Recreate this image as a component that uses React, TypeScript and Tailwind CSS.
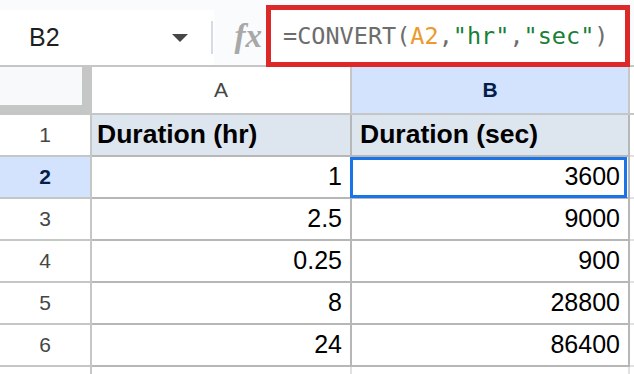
import React from 'react';

const rows = [
  { n: '1', a: 'Duration (hr)', b: 'Duration (sec)', head: true },
  { n: '2', a: '1', b: '3600', sel: true },
  { n: '3', a: '2.5', b: '9000' },
  { n: '4', a: '0.25', b: '900' },
  { n: '5', a: '8', b: '28800' },
  { n: '6', a: '24', b: '86400' },
];

const App: React.FC = () => {
  return (
    <div className="relative w-[634px] h-[374px] overflow-hidden bg-white font-['Liberation_Sans',Arial,sans-serif] text-black">
      {/* name box + formula bar */}
      <div className="flex h-[67px] pt-[10px] bg-[#f9fbfd] border-b-2 border-[#c4c7c5]">
        <div className="flex items-center w-[214px] h-[55px] bg-white">
          <span className="w-[172px] pl-[29px] text-[25px] text-[#1f1f1f]">B2</span>
          <svg width="16" height="8" viewBox="0 0 16 8" className="mt-[1px]">
            <polygon points="0,0 16,0 8,8" fill="#444746" />
          </svg>
          <div className="ml-auto mr-[1px] w-[2px] h-[33px] bg-[#d3dce6]" />
        </div>
        <div className="flex items-center justify-end w-[52px] h-[55px] pr-[4px]">
          <span className="font-['Liberation_Serif',serif] italic font-bold text-[33px] text-[#a8a8a8] leading-none mb-[2px]">
            fx
          </span>
        </div>
      </div>

      {/* formula, outlined in red */}
      <div className="absolute left-[266px] top-[5px] w-[364px] h-[62px] border-[5px] border-[#dc2828] bg-white flex items-center pl-[12px] pt-[2px]">
        <span className="font-['DejaVu_Sans_Mono',monospace] text-[23.5px] text-[#6d6d6d] whitespace-pre">
          =CONVERT(<span className="text-[#ec9a2e]">A2</span>,<span className="text-[#188038]">"hr"</span>,<span className="text-[#188038]">"sec"</span>)
        </span>
      </div>

      {/* column headers */}
      <div className="flex h-[48px]">
        <div className="w-[92px] bg-[#c4c7c5] pr-[10px] pb-[10px]">
          <div className="h-full bg-[#f8f9fa]" />
        </div>
        <div className="flex items-center justify-center w-[260px] border-r-2 border-b-2 border-[#c4c7c5] text-[21px] text-[#444746]">
          A
        </div>
        <div className="flex items-center justify-center w-[278px] bg-[#d3e3fd] border-r-2 border-b-2 border-[#c4c7c5] text-[21px] font-bold text-[#041e49]">
          B
        </div>
        <div className="flex-1 border-b-2 border-[#c4c7c5]" />
      </div>

      {/* grid rows */}
      {rows.map((r) => (
        <div key={r.n} className="flex h-[42px]">
          <div
            className={`flex items-center justify-center w-[92px] border-r-2 border-b-2 border-[#c4c7c5] text-[21px] ${
              r.sel ? 'bg-[#d3e3fd] font-bold text-[#041e49]' : 'text-[#444746]'
            }`}
          >
            {r.n}
          </div>
          {r.head ? (
            <>
              <div className="flex items-center w-[260px] pl-[5px] bg-[#dde6ef] border-r-2 border-b-2 border-[#b7b7b7] text-[26.5px] font-bold">
                {r.a}
              </div>
              <div className="flex items-center w-[278px] pl-[8px] bg-[#dde6ef] border-r-2 border-b-2 border-[#b7b7b7] text-[26.5px] font-bold">
                {r.b}
              </div>
            </>
          ) : (
            <>
              <div className="flex items-center justify-end w-[260px] pr-[8px] border-r-2 border-b-2 border-[#b7b7b7] text-[25px]">
                {r.a}
              </div>
              <div className="flex items-center justify-end w-[278px] pr-[8px] border-r-2 border-b-2 border-[#b7b7b7] text-[25px]">
                {r.b}
              </div>
            </>
          )}
          <div className="flex-1 border-b-2 border-[#e1e1e1]" />
        </div>
      ))}

      {/* partial row 7 */}
      <div className="flex h-[42px]">
        <div className="w-[92px] border-r-2 border-[#c4c7c5]" />
        <div className="w-[260px] border-r-2 border-[#e1e1e1]" />
        <div className="w-[278px] border-r-2 border-[#e1e1e1]" />
      </div>

      {/* active cell B2 */}
      <div className="absolute left-[350px] top-[157px] w-[277px] h-[41px] border-[3px] border-[#1a73e8]" />
    </div>
  );
};

export default App;
